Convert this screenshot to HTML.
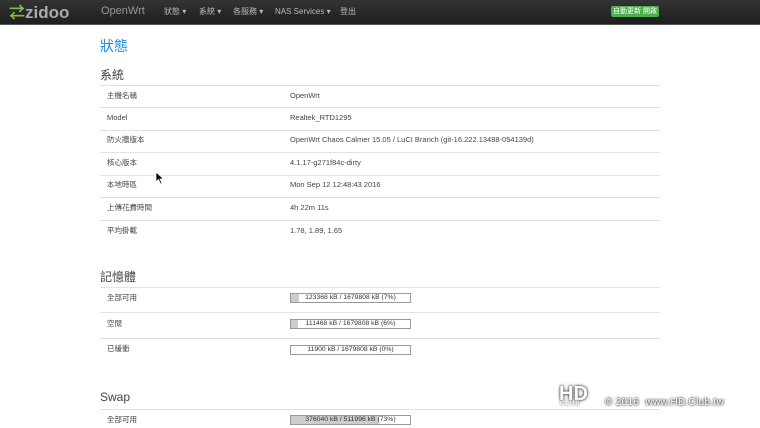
<!DOCTYPE html>
<html><head><meta charset="utf-8"><style>
*{margin:0;padding:0;box-sizing:border-box}
body{width:760px;height:428px;overflow:hidden;background:#fff;font-family:"Liberation Sans","Noto Sans CJK TC",sans-serif;color:#404040;position:relative}
.nav{position:absolute;left:0;top:0;width:760px;height:25px;background:linear-gradient(#333,#1e1e1e);border-bottom:1px solid #555}
.nav span{position:absolute;top:7px;font-size:8px;line-height:10px;color:#bbb}
.logo{position:absolute;left:9px;top:3px;font-size:17px;line-height:20px;font-weight:bold;color:#aaa}
.badge{position:absolute;left:611px;top:6px;background:#4cae4c;color:#fff;font-size:7px;line-height:9px;padding:1px 2px;border-radius:2px}
.t{position:absolute;font-size:7.5px;line-height:10px;color:#444}
.h{position:absolute;left:100px;font-size:12px;color:#444}
.ln{position:absolute;left:100px;width:560px;height:1px;background:#e2e2e2}
.bar{position:absolute;left:290px;width:121px;height:10px;border:1px solid #999;font-size:6.8px;text-align:center;line-height:8px;color:#333;background:#fff}
.bar i{position:absolute;left:0;top:0;bottom:0;background:#ccc}
.bar b{position:relative;font-weight:normal}
</style></head><body>
<div class="nav">
<div class="logo"><span style="position:static;color:#7bc043;font-size:16px">⇄</span>zidoo</div>
<span style="left:101px;font-size:11px;line-height:13px;top:5px;color:#999">OpenWrt</span>
<span style="left:164px">狀態 ▾</span>
<span style="left:199px">系統 ▾</span>
<span style="left:233px">各服務 ▾</span>
<span style="left:275px">NAS Services ▾</span>
<span style="left:340px">登出</span>
<div class="badge">自動更新 開啟</div>
</div>
<div class="h" style="top:36px;font-size:14px;color:#1e88e5">狀態</div>
<div class="h" style="top:66px">系統</div>
<div class="ln" style="top:85px"></div>
<div class="t" style="left:107px;top:91px">主機名稱</div><div class="t" style="left:290px;top:91px">OpenWrt</div>
<div class="ln" style="top:107px"></div>
<div class="t" style="left:107px;top:113px">Model</div><div class="t" style="left:290px;top:113px">Realtek_RTD1295</div>
<div class="ln" style="top:130px"></div>
<div class="t" style="left:107px;top:135px">防火牆版本</div><div class="t" style="left:290px;top:135px">OpenWrt Chaos Calmer 15.05 / LuCI Branch (git-16.222.13488-054139d)</div>
<div class="ln" style="top:152px"></div>
<div class="t" style="left:107px;top:158px">核心版本</div><div class="t" style="left:290px;top:158px">4.1.17-g271f84c-dirty</div>
<div class="ln" style="top:175px"></div>
<div class="t" style="left:107px;top:180px">本地時區</div><div class="t" style="left:290px;top:180px">Mon Sep 12 12:48:43 2016</div>
<div class="ln" style="top:197px"></div>
<div class="t" style="left:107px;top:203px">上傳花費時間</div><div class="t" style="left:290px;top:203px">4h 22m 11s</div>
<div class="ln" style="top:220px"></div>
<div class="t" style="left:107px;top:226px">平均掛載</div><div class="t" style="left:290px;top:226px">1.78, 1.89, 1.65</div>
<div class="h" style="top:268px">記憶體</div>
<div class="ln" style="top:287px"></div>
<div class="t" style="left:107px;top:293px">全部可用</div><div class="bar" style="top:293px"><i style="width:8px"></i><b>123368 kB / 1679808 kB (7%)</b></div>
<div class="ln" style="top:312px"></div>
<div class="t" style="left:107px;top:319px">空閒</div><div class="bar" style="top:319px"><i style="width:7px"></i><b>111468 kB / 1679808 kB (6%)</b></div>
<div class="ln" style="top:338px"></div>
<div class="t" style="left:107px;top:344px">已緩衝</div><div class="bar" style="top:345px"><b>11900 kB / 1679808 kB (0%)</b></div>
<div class="h" style="top:390px">Swap</div>
<div class="ln" style="top:409px"></div>
<div class="t" style="left:107px;top:415px">全部可用</div><div class="bar" style="top:415px"><i style="width:88px"></i><b>376040 kB / 511996 kB (73%)</b></div>
<div style="position:absolute;left:559px;top:383px;color:#fff;font-size:20px;line-height:22px;font-weight:bold;text-shadow:0 0 3px #444,0 0 2px #444">HD</div>
<div style="position:absolute;left:560px;top:401px;color:#fff;font-size:6px;font-weight:bold;letter-spacing:1px;text-shadow:0 0 2px #444">CLUB</div>
<div style="position:absolute;left:605px;top:397px;color:#fff;font-size:10px;line-height:12px;letter-spacing:.3px;text-shadow:0 0 2px #333,0 0 2px #333">© 2016 &nbsp;www.HD.Club.tw</div>
<svg style="position:absolute;left:155px;top:171px" width="10" height="14" viewBox="0 0 10 14"><path d="M1 1 L1 11 L3.5 8.5 L5.5 13 L7 12.3 L5 8 L8.5 8 Z" fill="#000" stroke="#fff" stroke-width=".8"/></svg>
</body></html>
